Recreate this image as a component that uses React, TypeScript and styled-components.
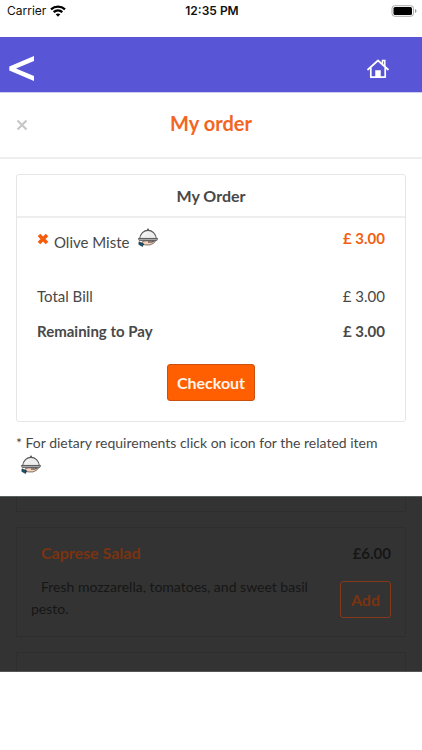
import React from "react";
import styled, { createGlobalStyle } from "styled-components";

const GlobalStyle = createGlobalStyle`
  *, *::before, *::after { box-sizing: border-box; }
  body {
    margin: 0;
    background: #fff;
    color: #484848;
    font-family: Lato, "Liberation Sans", sans-serif;
    font-size: 15px;
    line-height: 22px;
  }
  h1, h2, h3, p, dl, dt, dd { margin: 0; font: inherit; }
  button { font: inherit; cursor: pointer; }
`;

const StatusBar = styled.header`
  display: grid;
  grid-template-columns: 1fr auto 1fr;
  align-items: center;
  height: 37px;
  padding: 0 5px 15px 7px;
  color: #111;
  font-family: Inter, "Liberation Sans", sans-serif;
  font-size: 12px;
`;

const Carrier = styled.span`
  display: flex;
  align-items: center;
  gap: 4px;
`;

const Clock = styled.time`
  font-weight: 600;
`;

const BatteryIcon = styled.svg`
  justify-self: end;
`;

const NavBar = styled.nav`
  display: flex;
  align-items: center;
  justify-content: space-between;
  height: 56px;
  padding: 0 33px 0 8px;
  background: #5856d6;
  border-bottom: 1px solid #cdccf0;
`;

const IconButton = styled.button`
  display: flex;
  padding: 0;
  border: 0;
  background: none;
  color: inherit;
`;

const NavButton = styled(IconButton)`
  padding-top: 8px;
  color: #fff;
`;

const SheetHeader = styled.header`
  display: grid;
  grid-template-columns: 24px 1fr 24px;
  align-items: center;
  height: 66px;
  padding: 0 16px 4px;
  border-bottom: 2px solid #eee;
`;

const CloseButton = styled(IconButton)`
  padding-top: 3px;
  color: #c8c8c8;
`;

const SheetTitle = styled.h1`
  color: #f26522;
  font-size: 20px;
  font-weight: 700;
  text-align: center;
`;

const SheetBody = styled.div`
  padding: 15px 16px 22px;
`;

const OrderCard = styled.section`
  border: 1px solid #e6e6e6;
  border-radius: 3px;
`;

const CardTitle = styled.h2`
  padding: 10px 10px 9px;
  border-bottom: 2px solid #eee;
  font-size: 16px;
  font-weight: 700;
  text-align: center;
`;

const CardBody = styled.div`
  display: flex;
  flex-direction: column;
  padding: 9px 20px 20px;
`;

const ItemRow = styled.div`
  display: flex;
  justify-content: space-between;
  align-items: flex-start;
  margin-bottom: 32px;
`;

const ItemName = styled.div`
  display: flex;
  align-items: flex-start;
`;

const RemoveButton = styled(IconButton)`
  padding-top: 6px;
  margin-right: 5px;
  color: #f75c0c;
`;

const DietButton = styled(IconButton)`
  padding-top: 1px;
  margin-left: 8px;
`;

const ItemLabel = styled.span`
  padding-top: 4px;
`;

const ItemPrice = styled.span`
  color: #f2600f;
  font-weight: 700;
`;

const Totals = styled.dl`
  display: flex;
  flex-direction: column;
  gap: 13px;
`;

const TotalRow = styled.div<{ $strong?: boolean }>`
  display: flex;
  justify-content: space-between;
  font-weight: ${({ $strong }) => ($strong ? 700 : 400)};
`;

const ActionButton = styled.button`
  padding: 7px 10px;
  border: 1px solid;
  border-radius: 3px;
  font-size: 16px;
  font-weight: 700;
  line-height: 21px;
`;

const CheckoutButton = styled(ActionButton)`
  align-self: center;
  margin-top: 22px;
  padding: 7px 9px;
  border-color: #c9500f;
  background: #ff5f00;
  color: #fff3ea;
`;

const DietNote = styled.p`
  margin-top: 10px;
  font-size: 14px;
`;

const NoteIcon = styled.span`
  display: flex;
  padding-top: 1px;
  padding-left: 4px;
`;

const DimmedMenu = styled.section`
  display: flex;
  flex-direction: column;
  gap: 15px;
  height: 176px;
  padding: 0 16px;
  overflow: hidden;
  background: #333;
  border-top: 1px solid #5a605e;
  border-bottom: 1px solid #555;
  color: #161616;
`;

const MenuCard = styled.article`
  flex: none;
  min-height: 40px;
  padding: 14px;
  border: 1px solid #2e2e2e;
`;

const MenuCardEnd = styled.div`
  flex: none;
  height: 15px;
  border: 1px solid #2e2e2e;
  border-top: 0;
`;

const DishHeading = styled.header`
  display: flex;
  justify-content: space-between;
  padding-left: 10px;
  font-weight: 700;
`;

const DishName = styled.h3`
  color: #7a3310;
  font-size: 16px;
`;

const DishDetail = styled.div`
  display: flex;
  justify-content: space-between;
  align-items: flex-start;
  gap: 16px;
  padding: 12px 0 2px;
`;

const DishText = styled.p`
  font-size: 14px;
  text-indent: 10px;
`;

const AddButton = styled(ActionButton)`
  flex: none;
  margin-top: 5px;
  border-color: #85381a;
  background: transparent;
  color: #7a3310;
`;

const ClocheIcon = () => (
  <svg width="22" height="19" viewBox="0 0 22 20" aria-hidden="true">
    <path d="M5 14.5 8 13.5h11l-2 2.5-4 1.8H8l-3-1z" fill="#f5d3bd" stroke="#5b4a43" strokeWidth=".8" />
    <path d="M11 14.8h4l2-.8" fill="none" stroke="#333" strokeWidth="1" />
    <path d="m1.5 14.5 5 2.2-1.2 2.8-4-2.2z" fill="#174f68" stroke="#222f38" strokeWidth=".6" />
    <path d="M2.2 11.3C2.8 6 6.5 2.5 11 2.5s8.200 3.500 8.800 8.800z" fill="#ededee" stroke="#555" strokeWidth="1.100" />
    <path d="M6 9c.5-2 1.700-3.300 3.300-4" fill="none" stroke="#fff" strokeWidth="1" />
    <path d="M.8 11h20.400l-1 2.200H1.800z" fill="#a5a6a9" stroke="#4b4b4b" strokeWidth=".8" />
    <circle cx="11" cy="1.600" r="1.200" fill="#666" />
  </svg>
);

const CarrierWifi = () => (
  <svg width="16" height="12" viewBox="0 0 16 12" aria-hidden="true">
    <g fill="none" stroke="#000" strokeWidth="2.400">
      <path d="M1 4.300C5 .7 11 .7 15 4.300" />
      <path d="M3.700 7.200c2.500-2.300 6.100-2.300 8.600 0" />
    </g>
    <path d="M5.700 9.300c1.400-1.200 3.200-1.200 4.600 0L8 11.700z" />
  </svg>
);

export default function App() {
  return (
    <>
      <GlobalStyle />
      <StatusBar>
        <Carrier>
          Carrier
          <CarrierWifi />
        </Carrier>
        <Clock>12:35 PM</Clock>
        <BatteryIcon width="26" height="12" viewBox="0 0 26 12" role="img" aria-label="Battery full">
          <rect x="1" y=".7" width="21.500" height="10.600" rx="2.800" fill="none" stroke="#aaa" />
          <rect x="2.500" y="2" width="18.500" height="8" rx="1.500" />
          <path d="M24 4v4q1.500-.6 1.500-2T24 4" fill="#999" />
        </BatteryIcon>
      </StatusBar>

      <NavBar>
        <NavButton aria-label="Back">
          <svg width="28" height="28" viewBox="0 0 28 28" aria-hidden="true">
            <path d="M26 1v5L8 13.500 26 21v5L1.300 15.600v-4.200z" fill="currentColor" />
          </svg>
        </NavButton>
        <NavButton aria-label="Home">
          <svg width="22" height="20" viewBox="0 0 22 20" fill="none" stroke="currentColor" aria-hidden="true">
            <path d="M1 10.500 11 1.500l10 9M3.800 9v9.200h14.400V9" strokeWidth="1.700" strokeLinecap="round" strokeLinejoin="round" />
            <path d="M15.500 5V1.500h2.300V7.500" strokeWidth="1.500" />
            <path d="M8.500 18v-6.500h5V18z" fill="currentColor" strokeWidth=".5" />
          </svg>
        </NavButton>
      </NavBar>

      <main>
        <SheetHeader>
          <CloseButton aria-label="Close">
            <svg width="12" height="12" viewBox="0 0 12 12" aria-hidden="true">
              <path d="m1.500 1.500 9 9M10.500 1.500l-9 9" stroke="currentColor" strokeWidth="2.200" />
            </svg>
          </CloseButton>
          <SheetTitle>My order</SheetTitle>
        </SheetHeader>

        <SheetBody>
          <OrderCard>
            <CardTitle>My Order</CardTitle>
            <CardBody>
              <ItemRow>
                <ItemName>
                  <RemoveButton aria-label="Remove Olive Miste">
                    <svg width="12" height="12" viewBox="0 0 12 12" aria-hidden="true">
                      <path d="m2 2 8 8M10 2l-8 8" stroke="currentColor" strokeWidth="3.600" />
                    </svg>
                  </RemoveButton>
                  <ItemLabel>Olive Miste</ItemLabel>
                  <DietButton aria-label="Dietary requirements for Olive Miste">
                    <ClocheIcon />
                  </DietButton>
                </ItemName>
                <ItemPrice>£ 3.00</ItemPrice>
              </ItemRow>
              <Totals>
                <TotalRow>
                  <dt>Total Bill</dt>
                  <dd>£ 3.00</dd>
                </TotalRow>
                <TotalRow $strong>
                  <dt>Remaining to Pay</dt>
                  <dd>£ 3.00</dd>
                </TotalRow>
              </Totals>
              <CheckoutButton>Checkout</CheckoutButton>
            </CardBody>
          </OrderCard>
          <DietNote>
            * For dietary requirements click on icon for the related item
            <NoteIcon>
              <ClocheIcon />
            </NoteIcon>
          </DietNote>
        </SheetBody>
      </main>

      <DimmedMenu aria-label="Menu">
        <MenuCardEnd />
        <MenuCard>
          <DishHeading>
            <DishName>Caprese Salad</DishName>
            <span>£6.00</span>
          </DishHeading>
          <DishDetail>
            <DishText>Fresh mozzarella, tomatoes, and sweet basil pesto.</DishText>
            <AddButton>Add</AddButton>
          </DishDetail>
        </MenuCard>
        <MenuCard />
      </DimmedMenu>
    </>
  );
}
